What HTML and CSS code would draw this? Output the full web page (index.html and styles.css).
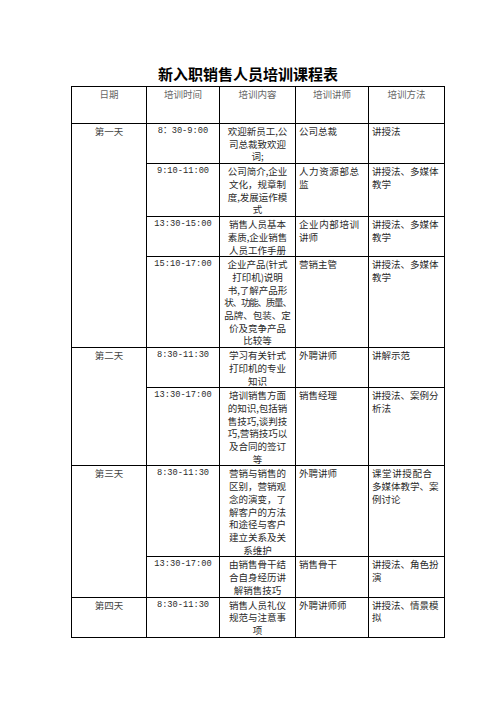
FILE: index.html
```html
<!DOCTYPE html>
<html lang="zh">
<head>
<meta charset="utf-8">
<title>新入职销售人员培训课程表</title>
<link rel="stylesheet" href="styles.css">
</head>
<body>
<div class="page">
  <h1 class="title">新入职销售人员培训课程表</h1>
  <table class="sched">
    <colgroup>
      <col class="c-date"><col class="c-time"><col class="c-content"><col class="c-teacher"><col class="c-method">
    </colgroup>
    <tr class="head h39">
      <th>日期</th><th>培训时间</th><th>培训内容</th><th>培训讲师</th><th>培训方法</th>
    </tr>
    <tr class="h39">
      <td class="date" rowspan="4">第一天</td>
      <td class="time">8：30-9:00</td>
      <td class="content">欢迎新员工,公<br>司总裁致欢迎<br>词;</td>
      <td class="left">公司总裁</td>
      <td class="left">讲授法</td>
    </tr>
    <tr class="h54">
      <td class="time">9:10-11:00</td>
      <td class="content">公司简介,企业<br>文化，规章制<br>度,发展运作模<br>式</td>
      <td class="left"><span class="sp">人力资源部总</span><br>监</td>
      <td class="left">讲授法、多媒体<br>教学</td>
    </tr>
    <tr class="h41">
      <td class="time">13:30-15:00</td>
      <td class="content">销售人员基本<br>素质,企业销售<br>人员工作手册</td>
      <td class="left"><span class="sp">企业内部培训</span><br>讲师</td>
      <td class="left">讲授法、多媒体<br>教学</td>
    </tr>
    <tr class="h91">
      <td class="time">15:10-17:00</td>
      <td class="content">企业产品(针式<br>打印机)说明<br>书,了解产品形<br><span class="tight">状、功能、质量、</span><br>品牌、包装、定<br>价及竞争产品<br>比较等</td>
      <td class="left">营销主管</td>
      <td class="left">讲授法、多媒体<br>教学</td>
    </tr>
    <tr class="h42">
      <td class="date" rowspan="2">第二天</td>
      <td class="time">8:30-11:30</td>
      <td class="content">学习有关针式<br>打印机的专业<br>知识</td>
      <td class="left">外聘讲师</td>
      <td class="left">讲解示范</td>
    </tr>
    <tr class="h77">
      <td class="time">13:30-17:00</td>
      <td class="content">培训销售方面<br>的知识,包括销<br>售技巧,谈判技<br>巧,营销技巧以<br>及合同的签订<br>等</td>
      <td class="left">销售经理</td>
      <td class="left">讲授法、案例分<br>析法</td>
    </tr>
    <tr class="h92">
      <td class="date" rowspan="2">第三天</td>
      <td class="time">8:30-11:30</td>
      <td class="content">营销与销售的<br>区别，营销观<br>念的演变，了<br>解客户的方法<br>和途径与客户<br>建立关系及关<br>系维护</td>
      <td class="left">外聘讲师</td>
      <td class="left"><span class="sp">课堂讲授配合</span><br>多媒体教学、案<br>例讨论</td>
    </tr>
    <tr class="h40">
      <td class="time">13:30-17:00</td>
      <td class="content">由销售骨干结<br>合自身经历讲<br>解销售技巧</td>
      <td class="left">销售骨干</td>
      <td class="left">讲授法、角色扮<br>演</td>
    </tr>
    <tr class="h40">
      <td class="date">第四天</td>
      <td class="time">8:30-11:30</td>
      <td class="content">销售人员礼仪<br>规范与注意事<br>项</td>
      <td class="left">外聘讲师师</td>
      <td class="left">讲授法、情景模<br>拟</td>
    </tr>
  </table>
</div>
</body>
</html>
```

FILE: styles.css
```css
html, body {
  margin: 0;
  padding: 0;
  background: #ffffff;
}

.page {
  padding-top: 64px;
  font-family: "Noto Sans CJK SC", "Noto Sans", sans-serif;
}

.title {
  margin: 0 0 2px 0;
  font-size: 15px;
  line-height: 20px;
  font-weight: 700;
  text-align: center;
  color: #000;
}

.sched {
  margin-left: 71px;
  border-collapse: collapse;
  table-layout: fixed;
  width: 373px;
  font-size: 9.5px;
  line-height: 12.7px;
  color: #2a2a2a;
}

.c-date { width: 75px; }
.c-time { width: 73px; }
.c-content { width: 76px; }
.c-teacher { width: 73px; }
.c-method { width: 76px; }

.sched th,
.sched td {
  border: 1px solid #000;
  vertical-align: top;
  padding: 1px 3px 0 3px;
  overflow: hidden;
  white-space: nowrap;
}

.sched th {
  font-weight: 400;
  color: #666;
  text-align: center;
  padding-top: 1px;
}

.date { text-align: center; color: #444; }

.time {
  text-align: center;
  font-family: "Liberation Mono", "Noto Sans CJK SC", monospace;
  font-size: 8.7px;
}

.content { text-align: center; }

.left { text-align: left; padding-left: 6px; }

.sp { letter-spacing: 0.6px; }

.tight { letter-spacing: -1.2px; }

.h39 { height: 37px; }
.h40 { height: 38px; }
.h41 { height: 39px; }
.h42 { height: 40px; }
.h54 { height: 53px; }
.h77 { height: 76px; }
.h91 { height: 90px; }
.h92 { height: 91px; }
```
